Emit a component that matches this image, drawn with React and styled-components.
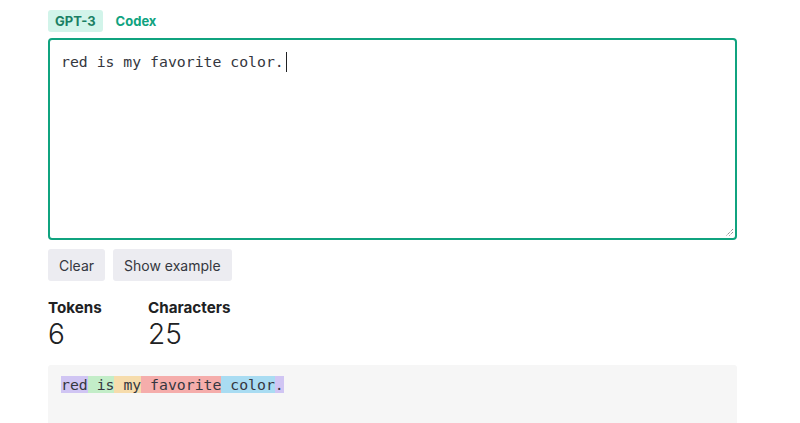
import React from 'react'
import styled, { createGlobalStyle } from 'styled-components'

const GlobalStyle = createGlobalStyle`
    body {
        margin: 0;
        background: #fff;
        font-family: Inter, Roboto, "Liberation Sans", sans-serif;
        color: #202123;
        overflow: hidden;
    }
`

const Page = styled.div`
    width: 689px;
    padding: 10px 0 0 48px;
`

const Tabs = styled.div`
    display: flex;
    gap: 6px;
    margin-bottom: 6px;
`

const Tab = styled.div`
    height: 22px;
    padding: 0 7px;
    display: flex;
    align-items: center;
    border-radius: 3px;
    font-size: 13px;
    font-weight: 700;
    color: ${p => (p.active ? '#1a7f64' : '#10a37f')};
    background: ${p => (p.active ? '#d2f4ea' : 'transparent')};
`

const Editor = styled.div`
    box-sizing: border-box;
    height: 202px;
    border: 2px solid #10a37f;
    border-radius: 4px;
    padding: 12px 11px;
    font-family: "DejaVu Sans Mono", "Liberation Mono", monospace;
    font-size: 14.8px;
    line-height: 20px;
    color: #353740;
    position: relative;
`

const Caret = styled.span`
    display: inline-block;
    width: 1px;
    height: 20px;
    background: #202123;
    vertical-align: top;
    margin-left: 2px;
`

const Grip = styled.svg`
    position: absolute;
    right: 1px;
    bottom: 1px;
`

const Buttons = styled.div`
    display: flex;
    gap: 8px;
    margin-top: 9px;
`

const Button = styled.div`
    height: 32px;
    padding: 0 11px;
    display: flex;
    align-items: center;
    border-radius: 3px;
    background: #ececf1;
    color: #353740;
    font-size: 14px;
`

const Stats = styled.div`
    display: flex;
    margin-top: 17px;
`

const Stat = styled.div`
    width: 100px;
`

const StatLabel = styled.div`
    font-size: 15.2px;
    font-weight: 700;
    line-height: 20px;
    color: #202123;
`

const StatValue = styled.div`
    font-size: 28px;
    font-weight: 300;
    line-height: 32px;
    color: #202123;
`

const TokenBox = styled.div`
    margin-top: 15px;
    height: 58px;
    box-sizing: border-box;
    padding: 11px 13px;
    background: #f6f6f6;
    border-radius: 3px 3px 0 0;
    font-family: "DejaVu Sans Mono", "Liberation Mono", monospace;
    font-size: 14.8px;
    line-height: 18px;
    color: #353740;
`

const Token = styled.span`
    background: ${p => p.color};
    white-space: pre;
`

const palette = ['#d0c5f3', '#c3edc8', '#f6dcac', '#f5adab', '#a9dcf2']
const tokens = ['red', ' is', ' my', ' favorite', ' color', '.']

export default function App() {
    return (
        <Page>
            <GlobalStyle />
            <Tabs>
                <Tab active>GPT-3</Tab>
                <Tab>Codex</Tab>
            </Tabs>

            <Editor>
                red is my favorite color.<Caret />
                <Grip width="10" height="10" viewBox="0 0 10 10">
                    <path d="M9 2 L2 9 M9 5 L5 9" stroke="#666" strokeWidth="1" strokeDasharray="1 1" />
                </Grip>
            </Editor>

            <Buttons>
                <Button>Clear</Button>
                <Button>Show example</Button>
            </Buttons>

            <Stats>
                <Stat>
                    <StatLabel>Tokens</StatLabel>
                    <StatValue>6</StatValue>
                </Stat>
                <Stat>
                    <StatLabel>Characters</StatLabel>
                    <StatValue>25</StatValue>
                </Stat>
            </Stats>

            <TokenBox>
                {tokens.map((t, i) => (
                    <Token key={i} color={palette[i % palette.length]}>{t}</Token>
                ))}
            </TokenBox>
        </Page>
    )
}
